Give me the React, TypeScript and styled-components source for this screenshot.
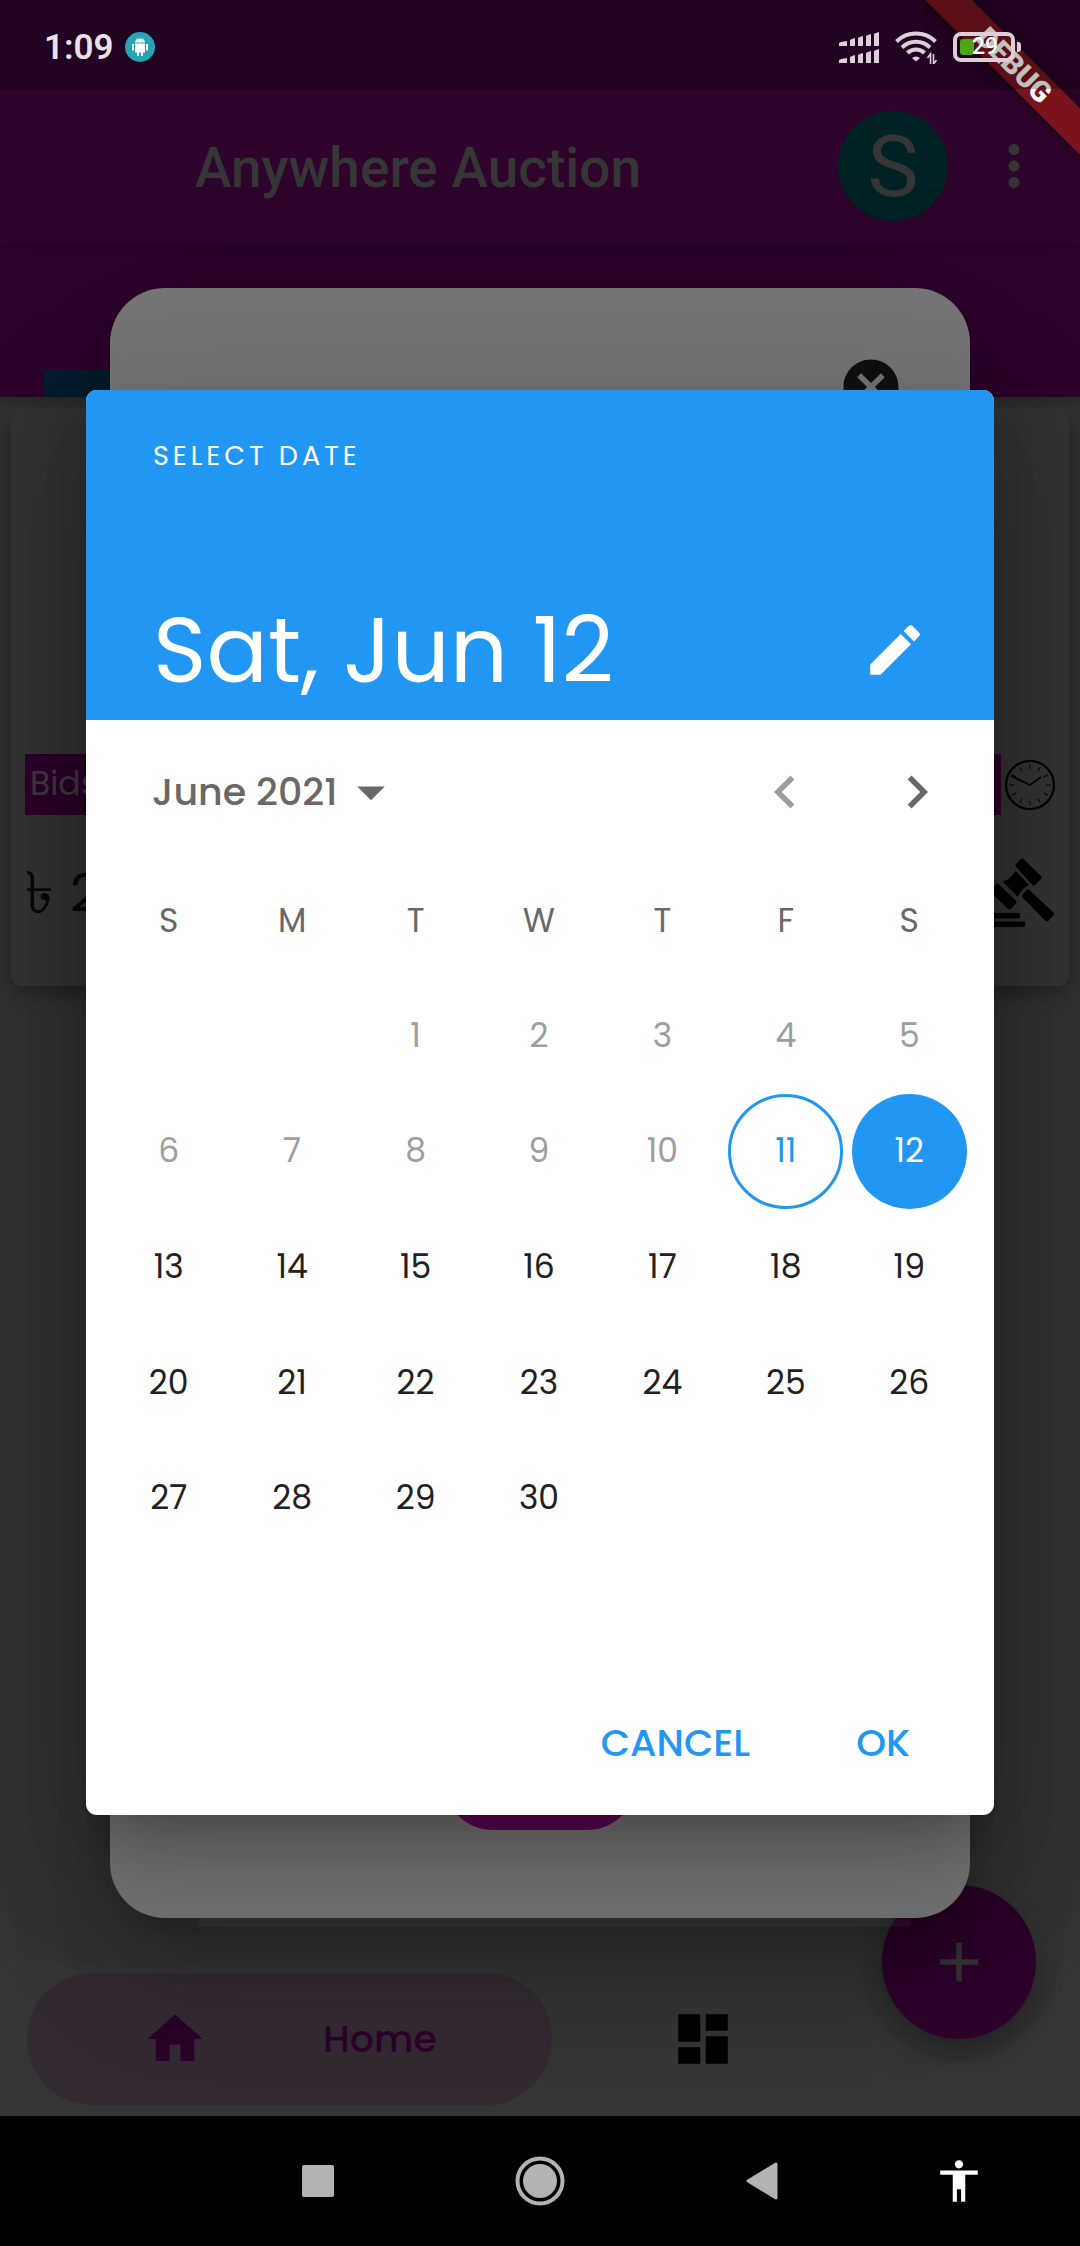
import React from "react";
import styled, { createGlobalStyle, css } from "styled-components";
import {
  MdAccessibility,
  MdAdd,
  MdArrowDropDown,
  MdCancel,
  MdChevronLeft,
  MdChevronRight,
  MdDashboard,
  MdEdit,
  MdHome,
  MdMoreVert,
} from "react-icons/md";

const color = {
  purple: "#2e042c",
  page: "#353535",
  surface: "#363636",
  modal: "#757575",
  blue: "#2196f3",
  text: "#212121",
  muted: "#686868",
  disabled: "#9e9e9e",
  sysIcon: "#b3b3b3",
};

const poppins = `Poppins, Inter, "Noto Sans", sans-serif`;
const roboto = `Roboto, "Noto Sans", sans-serif`;

const dialogShadow = css`
  box-shadow:
    0 30px 41px -19px rgba(0, 0, 0, 0.2),
    0 66px 105px 8px rgba(0, 0, 0, 0.14),
    0 25px 127px 22px rgba(0, 0, 0, 0.12);
`;

const GlobalStyle = createGlobalStyle`
  *, *::before, *::after { box-sizing: border-box; }
  body { margin: 0; background: #000; font-family: ${poppins}; }
  button {
    margin: 0;
    padding: 0;
    border: 0;
    background: none;
    color: inherit;
    font: inherit;
    cursor: pointer;
  }
  svg { display: block; flex: none; }
`;

const Screen = styled.div`
  position: relative;
  display: flex;
  flex-direction: column;
  min-height: 100vh;
  overflow: hidden;
  background: ${color.page};
`;

const Header = styled.header`
  background: ${color.purple};
`;

const StatusBar = styled.div`
  position: relative;
  z-index: 20;
  display: flex;
  align-items: center;
  justify-content: space-between;
  height: 89px;
  padding: 5px 59px 0 44px;
  background: rgba(0, 0, 0, 0.25);
  color: #e9e0e8;
  font-family: ${roboto};
`;

const StatusGroup = styled.div<{ $gap: number }>`
  display: flex;
  align-items: center;
  gap: ${(p) => p.$gap}px;
`;

const Clock = styled.span`
  padding-top: 2px;
  font-size: 35px;
  line-height: 40px;
  font-weight: 600;
`;

const Battery = styled.div`
  display: flex;
  align-items: center;
  gap: 2px;
  &::after {
    content: "";
    width: 4px;
    height: 10px;
    border-radius: 0 3px 3px 0;
    background: #dccfda;
  }
`;

const BatteryCell = styled.div`
  display: flex;
  align-items: center;
  width: 62px;
  height: 30px;
  padding: 0 3px;
  border: 4px solid #dccfda;
  border-radius: 8px;
  &::before {
    content: "";
    width: 14px;
    height: 16px;
    border-radius: 3px;
    background: #4fa518;
  }
`;

const BatteryLevel = styled.span`
  margin-left: -2px;
  color: #fff;
  font-size: 23px;
  line-height: 22px;
  font-weight: 500;
`;

const BannerCorner = styled.div`
  position: absolute;
  z-index: 10;
  top: 0;
  right: 0;
  width: 155px;
  height: 180px;
  overflow: hidden;
  pointer-events: none;
`;

const Banner = styled.div`
  position: absolute;
  top: 49px;
  left: -31px;
  width: 240px;
  height: 33px;
  transform: rotate(45deg);
  background: #7a131c;
  box-shadow: 0 0 16px rgba(0, 0, 0, 0.5);
  color: #fff;
  font-family: ${roboto};
  font-size: 29px;
  line-height: 33px;
  font-weight: 900;
  text-align: center;
`;

const AppBar = styled.div`
  display: flex;
  align-items: center;
  height: 154px;
  padding: 0 33px 0 195px;
  box-shadow: 0 6px 10px rgba(0, 0, 0, 0.2);
  color: ${color.surface};
  font-family: ${roboto};
`;

const Title = styled.h1`
  flex: 1;
  margin: 0;
  padding-top: 4px;
  font-size: 55px;
  line-height: 64px;
  font-weight: 500;
`;

const Avatar = styled.button`
  width: 110px;
  height: 110px;
  margin-right: 33px;
  padding-top: 2px;
  border-radius: 50%;
  background: #002224;
  font-size: 86px;
  line-height: 108px;
`;

const TabStrip = styled.div`
  display: flex;
  align-items: flex-end;
  height: 154px;
  padding: 0 44px;
`;

const TabIndicator = styled.div`
  width: 25%;
  height: 28px;
  background: #061e2f;
`;

const Content = styled.main`
  flex: 1;
  padding: 11px;
  box-shadow: inset 0 12px 12px -8px rgba(0, 0, 0, 0.25);
`;

const AuctionCard = styled.article`
  padding: 346px 14px 54px;
  border-radius: 11px;
  background: ${color.surface};
  box-shadow: 0 8px 20px rgba(0, 0, 0, 0.35);
`;

const BidRow = styled.div`
  display: flex;
  align-items: center;
  gap: 4px;
`;

const BidLabel = styled.div`
  flex: 1;
  height: 61px;
  padding-left: 5px;
  background: ${color.purple};
  color: #423c42;
  font-size: 33px;
  line-height: 60px;
`;

const PriceRow = styled.div`
  display: flex;
  align-items: center;
  justify-content: space-between;
  height: 78px;
  margin-top: 39px;
  color: #0a0a0a;
`;

const Price = styled.div`
  display: flex;
  align-items: center;
  gap: 16px;
  font-size: 52px;
  line-height: 78px;
`;

const Currency = styled.span`
  font-size: 58px;
  font-weight: 500;
`;

const BottomBar = styled.nav`
  position: relative;
  display: flex;
  align-items: center;
  height: 154px;
  padding: 0 27px;
  background: radial-gradient(
    circle at calc(100% - 121px) 0,
    rgba(0, 0, 0, 0.03) 98px,
    ${color.surface} 100px
  );
`;

const HomeTab = styled.button`
  display: flex;
  align-items: center;
  gap: 115px;
  width: 525px;
  height: 132px;
  padding-left: 115px;
  border-radius: 66px;
  background: #342a34;
  color: #2b032a;
  font-size: 38px;
  line-height: 48px;
  font-weight: 500;
`;

const DashboardTab = styled.button`
  margin-left: 118px;
  color: #000;
`;

const Fab = styled.button`
  position: absolute;
  top: -77px;
  right: 44px;
  display: grid;
  place-items: center;
  width: 154px;
  height: 154px;
  border-radius: 50%;
  background: ${color.purple};
  box-shadow: 0 12px 26px rgba(0, 0, 0, 0.3);
  color: ${color.surface};
`;

const SystemNav = styled.nav`
  position: relative;
  z-index: 5;
  display: grid;
  grid-template-columns: 1fr auto 1fr;
  align-items: center;
  height: 130px;
  padding: 0 94px;
  background: #000;
`;

const SystemKeys = styled.div`
  grid-column: 2;
  display: flex;
  gap: 168px;
`;

const SystemButton = styled.button<{ $bright?: boolean }>`
  display: grid;
  place-items: center;
  justify-self: end;
  width: 54px;
  height: 54px;
  color: ${(p) => (p.$bright ? "#fff" : color.sysIcon)};
`;

const Overlay = styled.div`
  position: absolute;
  inset: 89px 0 130px;
  display: flex;
  align-items: center;
  justify-content: center;
`;

const FormSheet = styled.section`
  position: relative;
  display: flex;
  flex-direction: column;
  justify-content: space-between;
  width: calc(100% - 220px);
  min-height: 1630px;
  padding: 66px 66px 88px;
  border-radius: 55px;
  background: ${color.modal};
  ${dialogShadow}
  &::after {
    content: "";
    position: absolute;
    right: 59px;
    bottom: -9px;
    left: 88px;
    height: 9px;
    background: rgba(255, 255, 255, 0.04);
  }
`;

const CloseButton = styled.button`
  align-self: flex-end;
  color: #101010;
`;

const SubmitButton = styled.button`
  align-self: center;
  width: 194px;
  height: 100px;
  border-radius: 50px;
  background: #5c0658;
`;

const Picker = styled.section`
  width: 908px;
  max-width: 100%;
  border-radius: 11px;
  background: #fff;
  overflow: hidden;
  ${dialogShadow}
`;

const PickerHeader = styled.div`
  display: flex;
  flex-direction: column;
  justify-content: space-between;
  height: 330px;
  padding: 49px 66px 14px 67px;
  background: ${color.blue};
  color: #fff;
`;

const Overline = styled.p`
  margin: 0;
  font-size: 27px;
  line-height: 34px;
  letter-spacing: 4px;
`;

const HeadlineRow = styled.div`
  display: flex;
  align-items: center;
  justify-content: space-between;
`;

const Headline = styled.h2`
  margin: 0;
  font-size: 91px;
  line-height: 112px;
  font-weight: 400;
`;

const MonthBar = styled.div`
  display: flex;
  align-items: center;
  height: 143px;
  padding: 0 11px 0 66px;
  color: ${color.muted};
`;

const MonthButton = styled.button`
  display: flex;
  align-items: center;
  margin-right: auto;
  font-size: 38px;
  line-height: 46px;
  font-weight: 500;
`;

const StepButton = styled.button`
  display: grid;
  place-items: center;
  width: 132px;
  height: 132px;
  &:disabled {
    color: ${color.disabled};
  }
`;

const CalendarWrap = styled.div`
  padding: 0 23px 116px 21px;
`;

const Calendar = styled.table`
  width: 100%;
  height: 693px;
  border-collapse: collapse;
  table-layout: fixed;
  font-size: 33px;
  line-height: 40px;
  th,
  td {
    height: 115px;
    padding: 0;
    text-align: center;
    font-weight: 400;
  }
  th {
    color: ${color.muted};
  }
`;

type DayState = "past" | "today" | "selected" | "normal";

const dayStyles = {
  past: css`
    color: ${color.disabled};
  `,
  today: css`
    border: 3px solid ${color.blue};
    color: ${color.blue};
  `,
  selected: css`
    background: ${color.blue};
    color: #fff;
  `,
  normal: css`
    color: ${color.text};
  `,
};

const Day = styled.button<{ $state: DayState }>`
  display: block;
  width: 115px;
  height: 115px;
  margin: 0 auto;
  border-radius: 50%;
  ${(p) => dayStyles[p.$state]}
`;

const Actions = styled.div`
  display: flex;
  align-items: center;
  justify-content: flex-end;
  gap: 66px;
  height: 143px;
  padding: 0 64px 2px 0;
`;

const ActionButton = styled.button`
  padding: 0 20px;
  color: ${color.blue};
  font-size: 38px;
  line-height: 99px;
  font-weight: 500;
`;

const AndroidBadge = () => (
  <svg width="30" height="30" viewBox="0 0 30 30">
    <circle cx="15" cy="15" r="15" fill="#26a5b3" />
    <g fill="#fff">
      <path d="M10 10.500a5 4 0 0 1 10 0z" />
      <path d="M10 11.500h10v9h-2v3.500h-2v-3.500h-2v3.500h-2v-3.500h-2z" />
      <path d="M7 12h2v6.500h-2zM21 12h2v6.500h-2z" />
      <path d="M11.500 6.500l1.500 2M18.500 6.500l-1.500 2" stroke="#fff" />
    </g>
    <circle cx="13" cy="9" r=".6" fill="#26a5b3" />
    <circle cx="17" cy="9" r=".6" fill="#26a5b3" />
  </svg>
);

const SignalIcon = () => (
  <svg width="40" height="31" viewBox="0 0 40 31" fill="#dccfda">
    {[0, 17].map((y) => (
      <path
        key={y}
        transform={`translate(0 ${y})`}
        d="M0 11l2-1 6-1v5H0zM11 8l2-1 3-1v8h-5zM19 6l2-1 3-1v10h-5zM27 4l2-1 3-1v12h-5zM35 2l2-1 3-1v14h-5z"
      />
    ))}
  </svg>
);

const WifiIcon = () => (
  <svg width="42" height="33" viewBox="0 0 42 33" fill="none" stroke="#dccfda">
    <path d="M1.500 10.500a28 28 0 0 1 39 0" strokeWidth="4" />
    <path d="M7 16.500a20 20 0 0 1 28 0" strokeWidth="4" />
    <path d="M12.500 22a12 12 0 0 1 17 0" strokeWidth="4" />
    <path d="M17 27a6 6 0 0 1 8 0l-4 3.500z" fill="#dccfda" stroke="none" />
    <path d="M35.500 33v-10l-3 4M38.500 23v10l3-4" strokeWidth="1.600" />
  </svg>
);

const ClockFace = () => (
  <svg width="50" height="50" viewBox="0 0 50 50" fill="none" stroke="#000">
    <circle cx="25" cy="25" r="24" strokeWidth="2.200" />
    {Array.from({ length: 12 }, (_, i) => (
      <path key={i} d="M25 4.500v4.500" strokeWidth="1" transform={`rotate(${i * 30} 25 25)`} />
    ))}
    <path d="M6 16l19 9 11-8" strokeWidth="1.800" />
  </svg>
);

const GavelIcon = () => (
  <svg width="86" height="70" viewBox="970 859 86 70" fill="#000">
    <g stroke="#000" strokeWidth="4" strokeLinejoin="round">
      <path d="M1023 861.500l17.500 17-6 6-16-18z" />
      <path d="M998 886.500l17.500 16.500-5 5.500-16.500-16z" />
      <path d="M1025 897l4-4.500 24 22.500-5 5.500z" />
    </g>
    <path d="M1016.600 872l13.400 14q-7 3-11.300 11.700L1004 882.700q8-3 12.600-10.700z" />
    <rect x="976" y="914" width="45" height="5.500" rx="1" />
    <rect x="971" y="922.500" width="55" height="5.500" rx="1" />
  </svg>
);

const weekdays = ["S", "M", "T", "W", "T", "F", "S"];
const firstWeekday = 2;
const daysInMonth = 30;
const today = 11;
const selected = 12;

const weeks: (number | null)[][] = Array.from({ length: 5 }, (_, w) =>
  Array.from({ length: 7 }, (_, d) => {
    const day = w * 7 + d - firstWeekday + 1;
    return day >= 1 && day <= daysInMonth ? day : null;
  }),
);

const stateOf = (day: number): DayState => {
  if (day === selected) return "selected";
  if (day === today) return "today";
  return day < today ? "past" : "normal";
};

export default function App() {
  return (
    <>
      <GlobalStyle />
      <Screen>
        <Header>
          <StatusBar>
            <StatusGroup $gap={11}>
              <Clock>1:09</Clock>
              <AndroidBadge />
            </StatusGroup>
            <StatusGroup $gap={16}>
              <SignalIcon />
              <WifiIcon />
              <Battery>
                <BatteryCell>
                  <BatteryLevel>29</BatteryLevel>
                </BatteryCell>
              </Battery>
            </StatusGroup>
          </StatusBar>
          <AppBar>
            <Title>Anywhere Auction</Title>
            <Avatar aria-label="Account">S</Avatar>
            <button aria-label="More options">
              <MdMoreVert size={66} />
            </button>
          </AppBar>
          <TabStrip>
            <TabIndicator />
          </TabStrip>
        </Header>

        <Content>
          <AuctionCard>
            <BidRow>
              <BidLabel>Bids</BidLabel>
              <ClockFace />
            </BidRow>
            <PriceRow>
              <Price>
                <Currency>৳</Currency>
                <span>2</span>
              </Price>
              <GavelIcon />
            </PriceRow>
          </AuctionCard>
        </Content>

        <BottomBar>
          <HomeTab>
            <MdHome size={66} />
            Home
          </HomeTab>
          <DashboardTab aria-label="Dashboard">
            <MdDashboard size={66} />
          </DashboardTab>
          <Fab aria-label="Add">
            <MdAdd size={66} />
          </Fab>
        </BottomBar>

        <SystemNav>
          <SystemKeys>
            <SystemButton aria-label="Recent apps">
              <svg width="32" height="32" viewBox="0 0 32 32">
                <rect width="32" height="32" rx="2" fill="currentColor" />
              </svg>
            </SystemButton>
            <SystemButton aria-label="Home screen">
              <svg width="50" height="50" viewBox="0 0 50 50">
                <circle cx="25" cy="25" r="22.500" fill="none" stroke="currentColor" strokeWidth="4" />
                <circle cx="25" cy="25" r="17" fill="currentColor" />
              </svg>
            </SystemButton>
            <SystemButton aria-label="Back">
              <svg width="32" height="38" viewBox="0 0 32 38">
                <path
                  d="M30 2v34L2 19z"
                  fill="currentColor"
                  stroke="currentColor"
                  strokeWidth="3"
                  strokeLinejoin="round"
                />
              </svg>
            </SystemButton>
          </SystemKeys>
          <SystemButton $bright aria-label="Accessibility">
            <MdAccessibility size={50} />
          </SystemButton>
        </SystemNav>

        <Overlay>
          <FormSheet>
            <CloseButton aria-label="Close">
              <MdCancel size={66} />
            </CloseButton>
            <SubmitButton aria-label="Submit" />
          </FormSheet>
        </Overlay>

        <Overlay>
          <Picker role="dialog" aria-label="Select date">
            <PickerHeader>
              <Overline>SELECT DATE</Overline>
              <HeadlineRow>
                <Headline>Sat, Jun 12</Headline>
                <button aria-label="Type a date">
                  <MdEdit size={66} />
                </button>
              </HeadlineRow>
            </PickerHeader>
            <MonthBar>
              <MonthButton>
                June 2021
                <MdArrowDropDown size={66} />
              </MonthButton>
              <StepButton aria-label="Previous month" disabled>
                <MdChevronLeft size={66} />
              </StepButton>
              <StepButton aria-label="Next month">
                <MdChevronRight size={66} />
              </StepButton>
            </MonthBar>
            <CalendarWrap>
              <Calendar>
                <thead>
                  <tr>
                    {weekdays.map((name, i) => (
                      <th key={i} scope="col">
                        {name}
                      </th>
                    ))}
                  </tr>
                </thead>
                <tbody>
                  {weeks.map((week, w) => (
                    <tr key={w}>
                      {week.map((day, d) => (
                        <td key={d}>
                          {day !== null && (
                            <Day $state={stateOf(day)} disabled={day < today}>
                              {day}
                            </Day>
                          )}
                        </td>
                      ))}
                    </tr>
                  ))}
                </tbody>
              </Calendar>
            </CalendarWrap>
            <Actions>
              <ActionButton>CANCEL</ActionButton>
              <ActionButton>OK</ActionButton>
            </Actions>
          </Picker>
        </Overlay>

        <BannerCorner>
          <Banner>DEBUG</Banner>
        </BannerCorner>
      </Screen>
    </>
  );
}
